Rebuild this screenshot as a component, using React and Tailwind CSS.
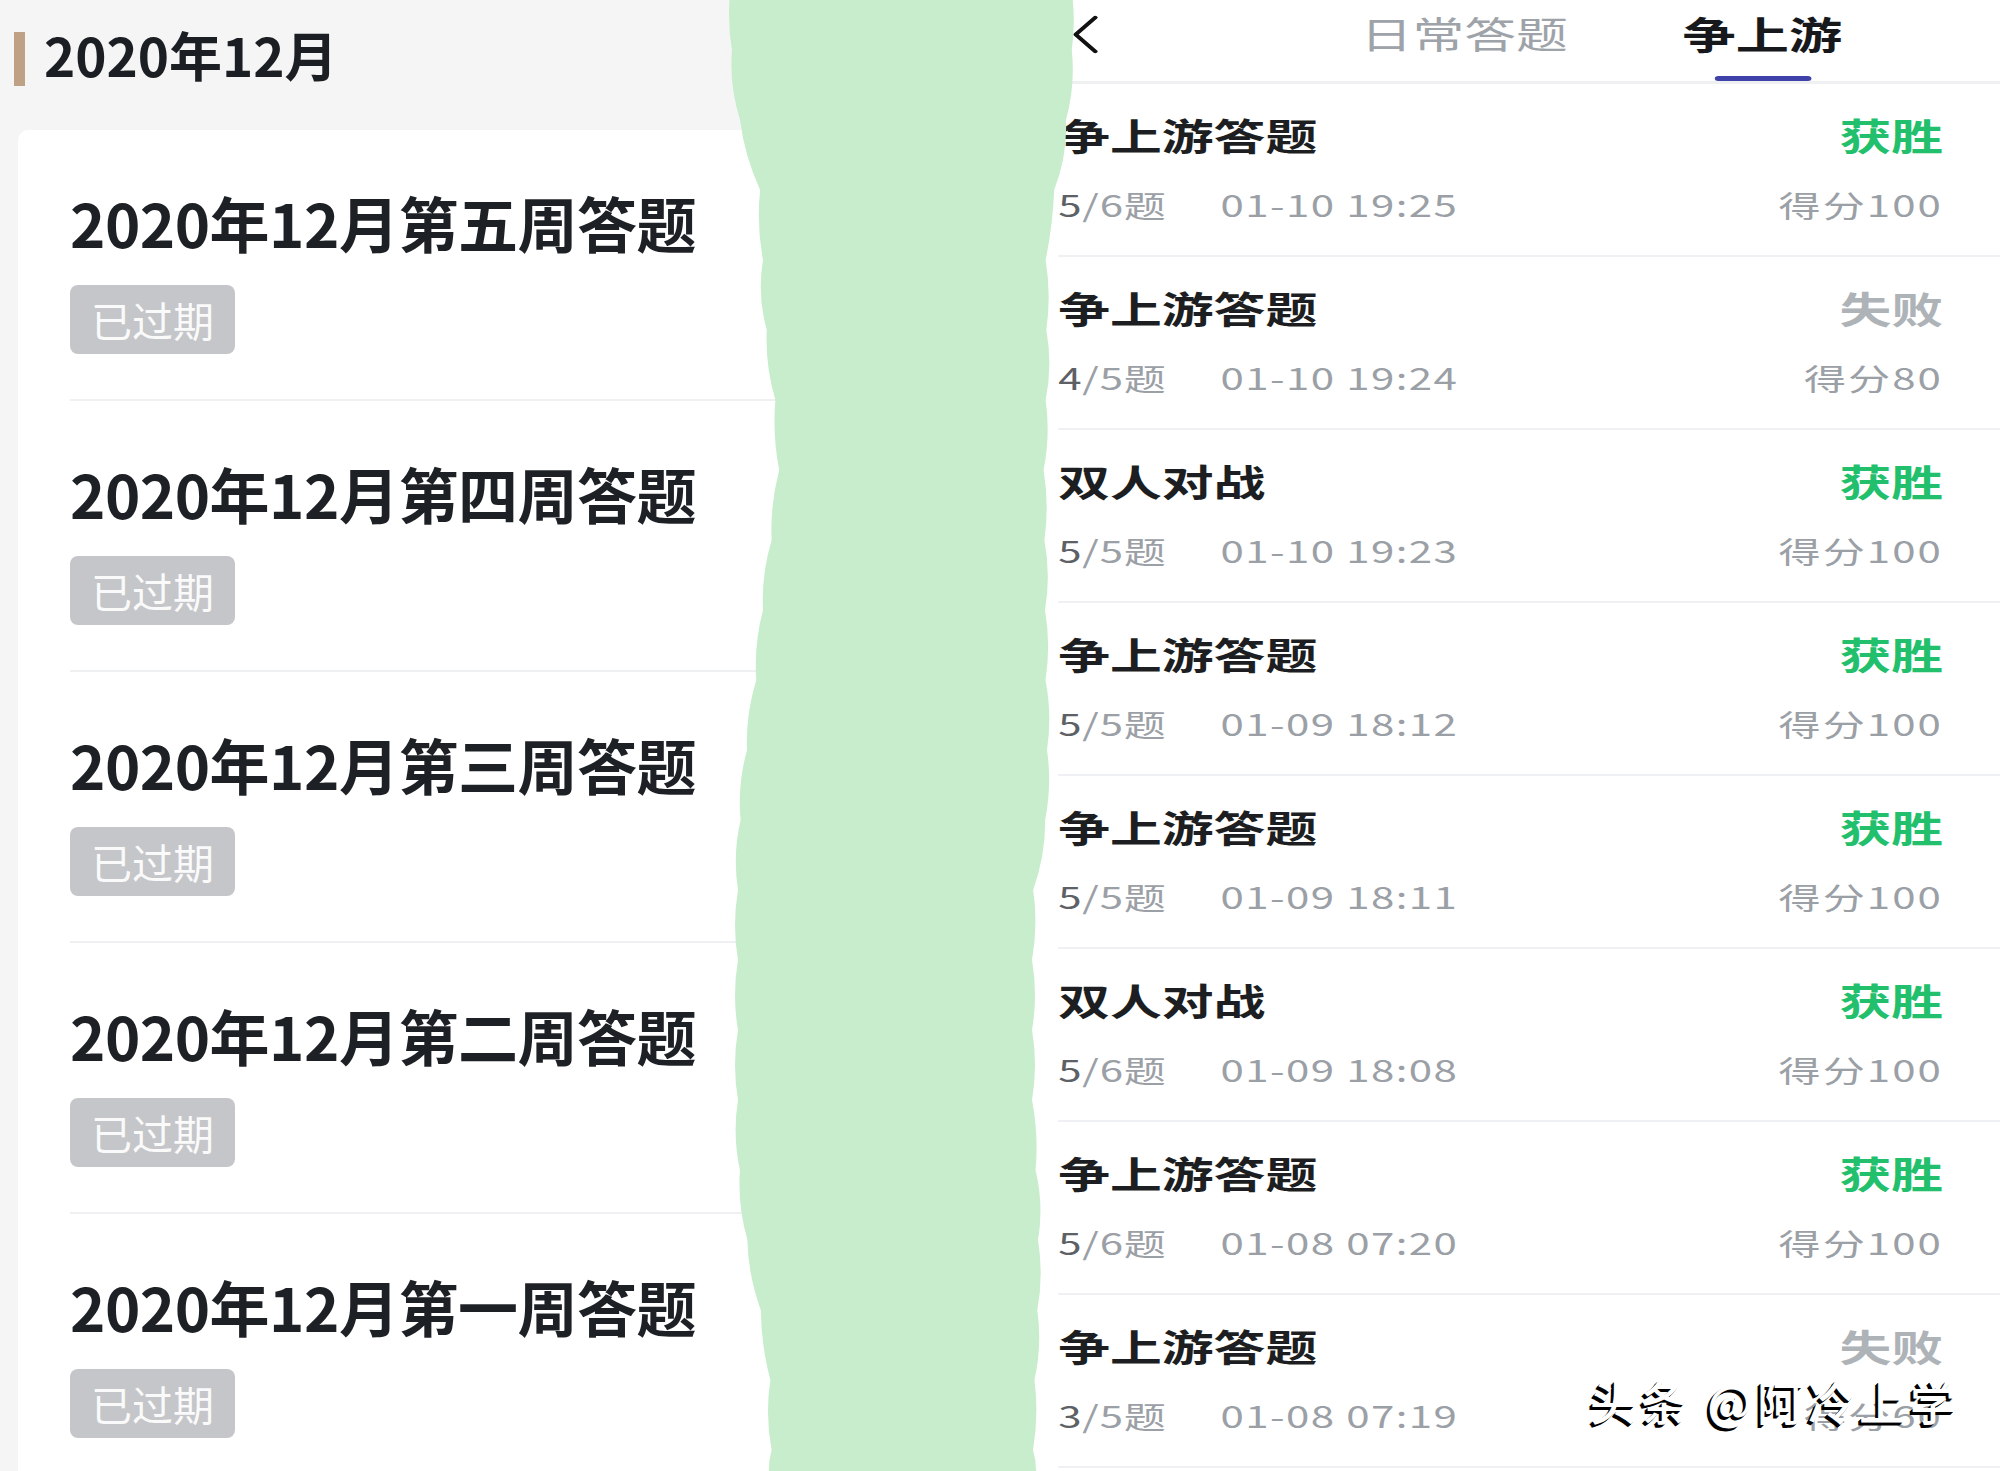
import React from "react";

const weeks = ["第五周", "第四周", "第三周", "第二周", "第一周"];

const records = [
  { title: "争上游答题", win: true, a: "5", b: "/6题", time: "01-10 19:25", score: "得分100" },
  { title: "争上游答题", win: false, a: "4", b: "/5题", time: "01-10 19:24", score: "得分80" },
  { title: "双人对战", win: true, a: "5", b: "/5题", time: "01-10 19:23", score: "得分100" },
  { title: "争上游答题", win: true, a: "5", b: "/5题", time: "01-09 18:12", score: "得分100" },
  { title: "争上游答题", win: true, a: "5", b: "/5题", time: "01-09 18:11", score: "得分100" },
  { title: "双人对战", win: true, a: "5", b: "/6题", time: "01-09 18:08", score: "得分100" },
  { title: "争上游答题", win: true, a: "5", b: "/6题", time: "01-08 07:20", score: "得分100" },
  { title: "争上游答题", win: false, a: "3", b: "/5题", time: "01-08 07:19", score: "得分60" },
];

// edges of the green marker stroke (y, x) in page pixels
const LEFT = [[0,732],[56,732],[113,738],[188,760],[234,763],[300,763],[356,770],[413,777],[460,780],[497,777],[553,770],[610,763],[675,757],[741,748],[797,742],[863,738],[938,738],[1032,738],[1126,738],[1172,740],[1238,747],[1295,758],[1360,770],[1471,772]];
const RIGHT = [[0,1070],[56,1072],[103,1068],[169,1060],[216,1047],[281,1045],[356,1047],[422,1045],[488,1043],[563,1045],[657,1045],[750,1047],[825,1045],[891,1033],[938,1032],[1032,1032],[1126,1032],[1200,1038],[1257,1038],[1332,1037],[1407,1033],[1471,1033]];

function at(pts, y) {
  const yy = Math.max(0, Math.min(1471, y));
  for (let i = 1; i < pts.length; i++) {
    if (yy <= pts[i][0]) {
      const [y0, x0] = pts[i - 1];
      const [y1, x1] = pts[i];
      return x0 + ((x1 - x0) * (yy - y0)) / (y1 - y0);
    }
  }
  return pts[pts.length - 1][1];
}

function blobPath() {
  const step = 70, bump = 6, ox = 680;
  const ys = [];
  for (let y = -20; y < 1490; y += step) ys.push(y);
  ys.push(1490);
  let d = `M${at(LEFT, ys[0]) - ox} ${ys[0]}`;
  for (let i = 1; i < ys.length; i++) {
    const ym = (ys[i - 1] + ys[i]) / 2;
    d += ` Q${at(LEFT, ym) - ox - bump} ${ym} ${at(LEFT, ys[i]) - ox} ${ys[i]}`;
  }
  d += ` L${at(RIGHT, ys[ys.length - 1]) - ox} ${ys[ys.length - 1]}`;
  for (let i = ys.length - 1; i > 0; i--) {
    const ym = (ys[i] + ys[i - 1]) / 2;
    d += ` Q${at(RIGHT, ym) - ox + bump} ${ym} ${at(RIGHT, ys[i - 1]) - ox} ${ys[i - 1]}`;
  }
  return d + " Z";
}

function WeekItem({ week }) {
  return (
    <div className="ml-[52px] border-b-2 border-[#eef0f2] pt-[56px] pb-[45px]">
      <div className="whitespace-nowrap text-[60px] leading-[72px] font-bold tracking-[-0.5px] text-[#1d2024]">
        2020年12月{week}答题
      </div>
      <div className="mt-[27px] flex h-[69px] w-fit items-center rounded-[8px] bg-[#c5c6c9] px-[21px] text-[41px] leading-none text-[#fafafa]">
        已过期
      </div>
    </div>
  );
}

function RecordRow({ r }) {
  return (
    <div className="ml-[13px] border-b-2 border-[#eff0f3] pr-[41px] pt-[28px] pb-[33px]">
      <div className="flex items-center justify-between text-[37px] leading-[46px] font-bold">
        <span className="text-[#1c1e21]">{r.title}</span>
        <span className={r.win ? "text-[#22bf6d]" : "text-[#aeb3b8]"}>{r.win ? "获胜" : "失败"}</span>
      </div>
      <div className="mt-[28px] flex items-center justify-between text-[30px] leading-[36px] text-[#9ba0a6]">
        <div className="flex">
          <span className="inline-block w-[116px] tracking-[0.6px]">
            <span className="text-[#5d6166]">{r.a}</span>
            {r.b}
          </span>
          <span className="tracking-[1px]">{r.time}</span>
        </div>
        <span className="tracking-[1.5px]">{r.score}</span>
      </div>
    </div>
  );
}

export default function App() {
  return (
    <div className="relative flex h-[1471px] w-[2000px] overflow-hidden bg-white font-['Noto_Sans_CJK_SC',sans-serif]">
      {/* left screenshot: weekly quizzes */}
      <div className="flex w-[780px] shrink-0 flex-col bg-[#f5f5f6]">
        <div className="flex h-[130px] shrink-0 items-center pb-[12px]">
          <div className="ml-[14px] h-[54px] w-[11px] bg-[#bfa285]" />
          <h1 className="mb-[11px] ml-[19px] text-[53px] leading-[64px] font-bold text-[#1b1e22]">2020年12月</h1>
        </div>
        <div className="ml-[18px] flex-1 rounded-tl-[10px] bg-white">
          {weeks.map((w) => (
            <WeekItem key={w} week={w} />
          ))}
        </div>
      </div>

      <div className="w-[260px] shrink-0" />

      {/* right screenshot: match records (horizontally stretched in the source) */}
      <div className="w-[960px] shrink-0 overflow-hidden">
        <div className="w-[686px] origin-top-left scale-x-[1.4]">
          <div className="h-[84px] border-b-[3px] border-[#eff0f2]">
            <div className="flex items-start pt-[10px]">
              <svg className="ml-[23px] mt-[5px] h-[39px] w-[19px]" viewBox="0 0 19 39" fill="none">
                <path d="M16.5 2.5 L2.5 19.5 L16.5 36.5" stroke="#111" strokeWidth="3.4" strokeLinecap="round" strokeLinejoin="round" />
              </svg>
              <span className="ml-[187px] text-[37px] leading-[46px] text-[#9ea3a9]">日常答题</span>
              <div className="ml-[82px] flex flex-col items-center">
                <span className="text-[38px] leading-[46px] font-bold text-[#16181b]">争上游</span>
                <div className="mt-[20px] h-[5px] w-[69px] rounded-full bg-[#3f42a8]" />
              </div>
            </div>
          </div>
          {records.map((r, i) => (
            <RecordRow key={i} r={r} />
          ))}
        </div>
      </div>

      {/* green marker stroke covering the seam */}
      <svg className="absolute left-[680px] top-0 h-[1471px] w-[420px]" viewBox="0 0 420 1471">
        <path d={blobPath()} fill="#c7edcc" />
      </svg>

      {/* watermark */}
      <div className="absolute left-[1590px] top-[1372px] whitespace-nowrap text-[46px] leading-[56px] font-medium tracking-[5px] text-white [text-shadow:-2px_2px_0_#000,-3px_3px_0_#000,-1px_1px_0_#000]">
        头条 @阿冷上学
      </div>
    </div>
  );
}
